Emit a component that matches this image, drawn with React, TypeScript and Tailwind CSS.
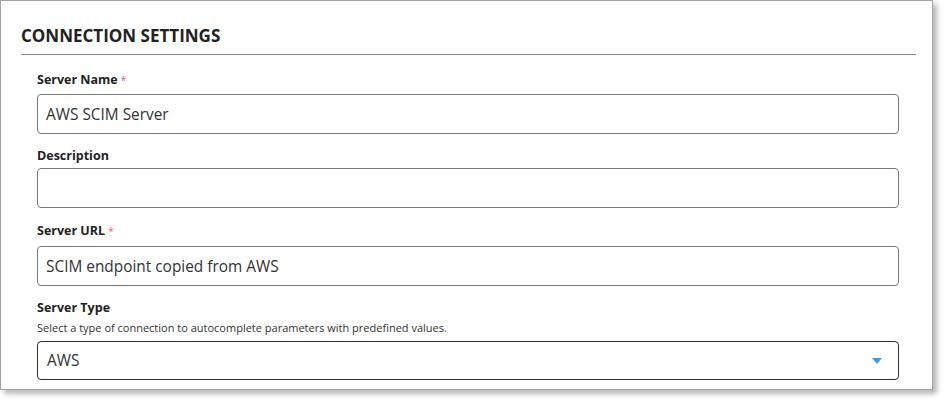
import { useState } from "react";

const font = { fontFamily: '"Open Sans", "Liberation Sans", sans-serif' };

function Campo({
  etiqueta,
  requerido,
  ayuda,
  children,
}: {
  etiqueta: string;
  requerido?: boolean;
  ayuda?: string;
  children: React.ReactNode;
}) {
  return (
    <div className="flex flex-col">
      <label className="h-[16px] text-[12.5px] font-bold leading-[16px] text-[#222]">
        {etiqueta}
        {requerido && <span className="ml-[3px] align-top text-[10px] font-normal text-[#e0607a]">*</span>}
      </label>
      {ayuda && (
        <p className="mt-[5px] text-[11px] leading-[14px] text-[#333]">{ayuda}</p>
      )}
      {children}
    </div>
  );
}

export default function App() {
  const [nombre, setNombre] = useState("AWS SCIM Server");
  const [descripcion, setDescripcion] = useState("");
  const [url, setUrl] = useState("SCIM endpoint copied from AWS");

  return (
    <div className="h-[405px] w-[948px] bg-white" style={font}>
      <div className="h-[390px] w-[933px] border border-[#a3a3a3] bg-white pl-[20px] pr-[16px] pt-[25px] shadow-[4px_4px_5px_rgba(0,0,0,0.28)]">
        <h2 className="border-b border-[#8a8a8a] pb-[8px] text-[17px] font-bold leading-[20px] text-[#222]">
          CONNECTION SETTINGS
        </h2>

        <div className="flex flex-col pl-[16px] pr-[17px]">
          <div className="mt-[17px]">
            <Campo etiqueta="Server Name" requerido>
              <input
                value={nombre}
                onChange={(e) => setNombre(e.target.value)}
                className="mt-[6px] h-[40px] rounded-[4px] border border-[#737b80] px-[8px] text-[15.4px] text-[#333] outline-none"
              />
            </Campo>
          </div>

          <div className="mt-[14px]">
            <Campo etiqueta="Description">
              <input
                value={descripcion}
                onChange={(e) => setDescripcion(e.target.value)}
                className="mt-[4px] h-[40px] rounded-[4px] border border-[#737b80] px-[8px] text-[15.4px] text-[#333] outline-none"
              />
            </Campo>
          </div>

          <div className="mt-[15px]">
            <Campo etiqueta="Server URL" requerido>
              <input
                value={url}
                onChange={(e) => setUrl(e.target.value)}
                className="mt-[7px] h-[40px] rounded-[4px] border border-[#737b80] px-[8px] text-[15.4px] text-[#333] outline-none"
              />
            </Campo>
          </div>

          <div className="mt-[14px]">
            <Campo
              etiqueta="Server Type"
              ayuda="Select a type of connection to autocomplete parameters with predefined values."
            >
              <div className="mt-[6px] flex h-[39px] items-center justify-between rounded-[4px] border border-[#2e2e2e] pl-[9px] pr-[16px]">
                <span className="text-[15.4px] text-[#333]">AWS</span>
                <svg width="10" height="6" viewBox="0 0 10 6">
                  <path d="M0 0 L10 0 L5 6 Z" fill="#3d9cf0" />
                </svg>
              </div>
            </Campo>
          </div>
        </div>
      </div>
    </div>
  );
}
